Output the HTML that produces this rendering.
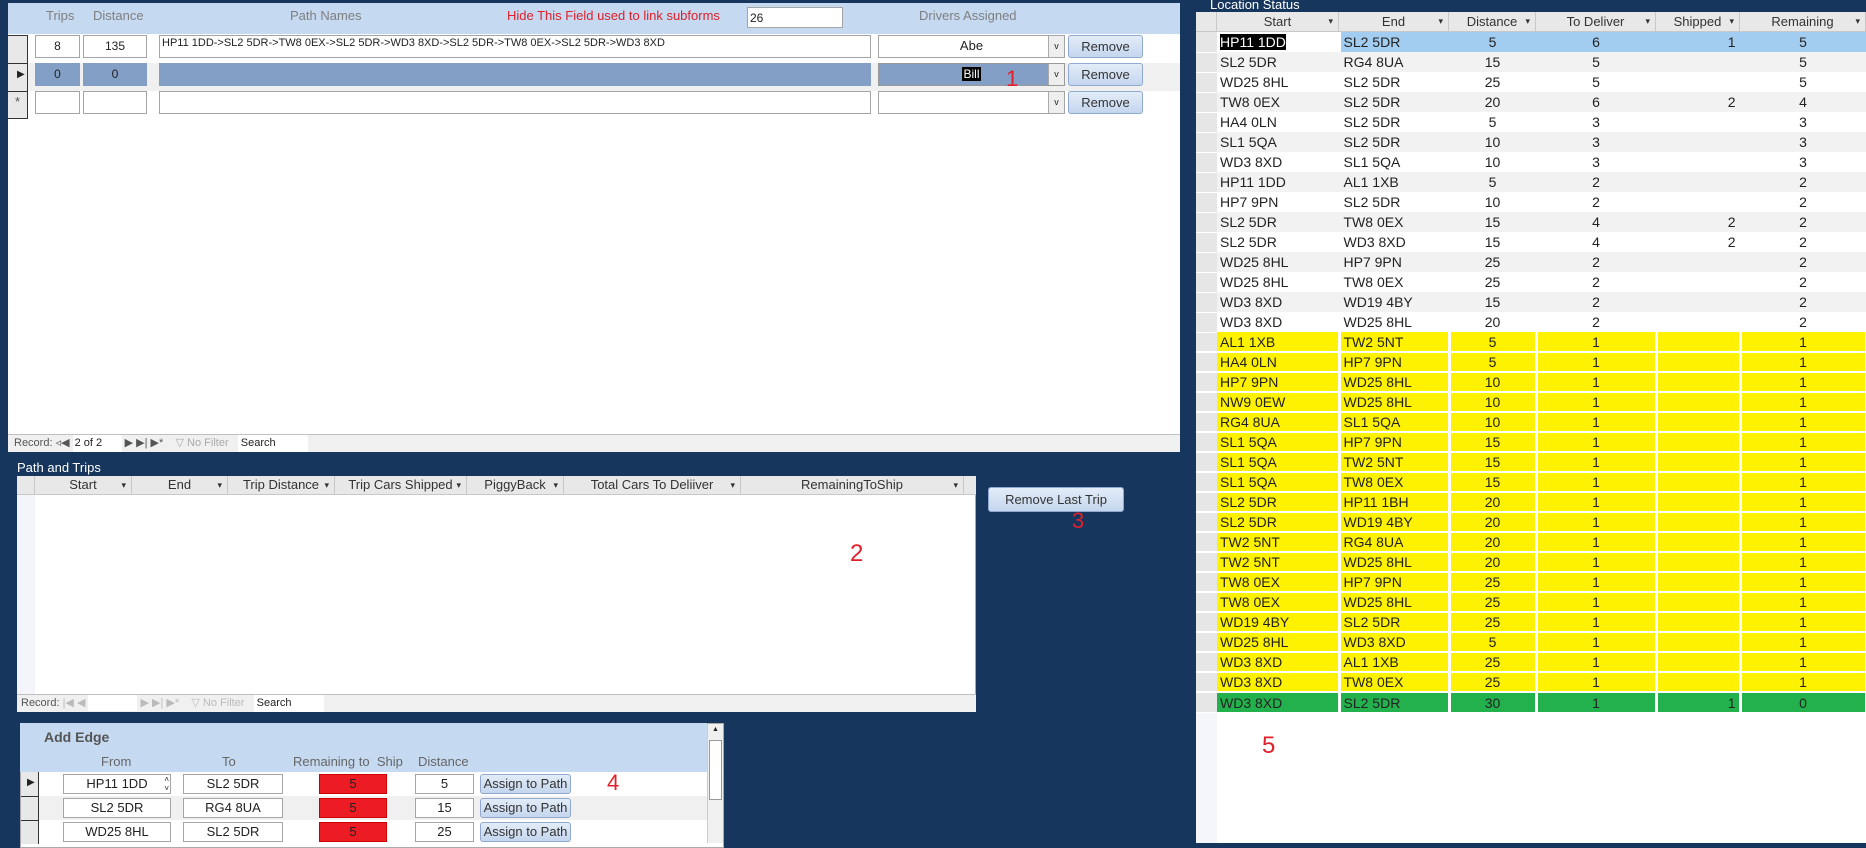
<!DOCTYPE html>
<html><head><meta charset="utf-8"><style>
*{box-sizing:border-box;margin:0;padding:0}
body{width:1866px;height:843px;background:#17365d;font-family:"Liberation Sans",sans-serif;position:relative;overflow:hidden;font-size:12px;color:#222}
.a{position:absolute}
.box{position:absolute;background:#fff;border:1px solid #a5a5a5;font-size:12px;text-align:center;line-height:20px}
.btn{position:absolute;background:linear-gradient(#e3ecf8,#c4d6ee);border:1px solid #8fa9cf;border-radius:3px;font-size:13px;text-align:center;color:#333}
.red{color:#e0202a;font-size:24px}
.hdr{position:absolute;background:#e8e8e8;border-bottom:1px solid #c8c8c8;font-size:13px;color:#333}
.hdr span{position:absolute;top:0;height:100%;border-right:1px solid #c8c8c8;text-align:center}
.hdr span i{position:absolute;right:5px;font-style:normal;font-size:9px}
table{border-collapse:collapse;table-layout:fixed}
#ls td{height:20px;font-size:14px;border-right:3px solid #fff;border-bottom:0;padding:0 3px;white-space:nowrap;overflow:hidden}
#ls td.s{background:#e6e6e6;border-bottom:1px solid #fff;border-right:0}
#ls tr.y td{background:#fff200;border-bottom:2px solid #fff}
#ls tr.y td.s,#ls tr.g td.s{background:#e6e6e6}
#ls tr.g td{background:#22b14c}
#ls tr.w td{background:#fff;border-right-color:#fff}
#ls tr.e td{background:#f2f2f2;border-right-color:#f2f2f2}
#ls tr.b td{background:#a3cdf0;border-right-color:#a3cdf0}
#ls tr.w td.s,#ls tr.e td.s,#ls tr.b td.s{background:#e6e6e6}
#ls td.c{text-align:center}#ls td.r{text-align:right}
.nav{position:absolute;background:#f0f0f0;border-top:1px solid #c0c0c0;font-size:11px;color:#555}
</style></head><body>

<!-- Top form -->
<div class="a" style="left:8px;top:3px;width:1172px;height:449px;background:#fff"></div>
<div class="a" style="left:8px;top:3px;width:1172px;height:31px;background:#c5d9f1"></div>
<div class="a" style="left:46px;top:8px;font-size:13px;color:#7f7f7f">Trips</div>
<div class="a" style="left:93px;top:8px;font-size:13px;color:#7f7f7f">Distance</div>
<div class="a" style="left:290px;top:8px;font-size:13px;color:#7f7f7f">Path Names</div>
<div class="a" style="left:507px;top:8px;font-size:13px;color:#e0202a">Hide This Field used to link subforms</div>
<div class="box" style="left:747px;top:7px;width:96px;height:21px;text-align:left;padding-left:2px;font-size:12px">26</div>
<div class="a" style="left:919px;top:8px;font-size:13px;color:#7f7f7f">Drivers Assigned</div>

<div class="a" style="left:8px;top:35px;width:1172px;height:28px;background:#fff"></div>
<div class="a" style="left:8px;top:63px;width:1172px;height:28px;background:#f0f0f0"></div>
<div class="a" style="left:8px;top:35px;width:20px;height:84px;background:#e8e8e8;border:1px solid #333;border-left:0"></div>
<div class="a" style="left:8px;top:63px;width:20px;height:1px;background:#333"></div>
<div class="a" style="left:8px;top:91px;width:20px;height:1px;background:#333"></div>
<div class="a" style="left:17px;top:69px;font-size:10px">&#9654;</div>
<div class="a" style="left:15px;top:94px;font-size:13px;color:#555">*</div>
<!-- row1 -->
<div class="box" style="left:35px;top:35px;width:45px;height:23px">8</div>
<div class="box" style="left:83px;top:35px;width:64px;height:23px">135</div>
<div class="box" style="left:159px;top:35px;width:712px;height:23px;text-align:left;padding-left:2px;font-size:11px;line-height:14px">HP11 1DD-&gt;SL2 5DR-&gt;TW8 0EX-&gt;SL2 5DR-&gt;WD3 8XD-&gt;SL2 5DR-&gt;TW8 0EX-&gt;SL2 5DR-&gt;WD3 8XD</div>
<div class="box" style="left:878px;top:35px;width:187px;height:23px;font-size:13px">Abe<span style="position:absolute;right:0;top:0;width:16px;height:21px;background:#eee;border-left:1px solid #aaa;font-size:9px">v</span></div>
<div class="btn" style="left:1068px;top:35px;width:75px;height:23px;line-height:21px">Remove</div>
<!-- row2 -->
<div class="box" style="left:35px;top:63px;width:45px;height:23px;background:#849fc5;border-color:#849fc5">0</div>
<div class="box" style="left:83px;top:63px;width:64px;height:23px;background:#849fc5;border-color:#849fc5">0</div>
<div class="box" style="left:159px;top:63px;width:712px;height:23px;background:#849fc5;border-color:#849fc5"></div>
<div class="box" style="left:878px;top:63px;width:187px;height:23px;background:#849fc5;border-color:#999"><span style="background:#000;color:#fff;padding:0 1px">Bill</span><span style="position:absolute;right:0;top:0;width:16px;height:21px;background:#eee;border-left:1px solid #aaa;font-size:9px">v</span></div>
<div class="btn" style="left:1068px;top:63px;width:75px;height:23px;line-height:21px">Remove</div>
<div class="a red" style="left:1006px;top:66px;font-size:22px">1</div>
<!-- row3 -->
<div class="box" style="left:35px;top:91px;width:45px;height:23px"></div>
<div class="box" style="left:83px;top:91px;width:64px;height:23px"></div>
<div class="box" style="left:159px;top:91px;width:712px;height:23px"></div>
<div class="box" style="left:878px;top:91px;width:187px;height:23px"><span style="position:absolute;right:0;top:0;width:16px;height:21px;background:#eee;border-left:1px solid #aaa;font-size:9px">v</span></div>
<div class="btn" style="left:1068px;top:91px;width:75px;height:23px;line-height:21px">Remove</div>
<div class="nav" style="left:8px;top:434px;width:1172px;height:18px;line-height:17px"><span style="margin-left:6px">Record: &#9667;&#9664; </span><span style="display:inline-block;background:#fff;width:49px;padding-left:2px;color:#222">2 of 2</span><span> &#9654; &#9654;| &#9654;* &nbsp;&nbsp; <span style="color:#aaa">&#9661; No Filter</span> &nbsp; </span><span style="display:inline-block;background:#fff;width:70px;padding-left:3px;color:#222">Search</span></div>

<!-- Location Status -->
<div class="a" style="left:1210px;top:-3px;color:#fff;font-size:13px">Location Status</div>
<div class="a" style="left:1196px;top:12px;width:670px;height:831px;background:#fff"></div>
<div class="a" style="left:1196px;top:712px;width:21px;height:131px;background:#f5f6fc"></div>
<div class="hdr" style="left:1196px;top:12px;width:670px;height:20px;line-height:19px">
<span style="left:0;width:21px"></span>
<span style="left:21px;width:122px">Start<i>&#9662;</i></span>
<span style="left:143px;width:110px">End<i>&#9662;</i></span>
<span style="left:253px;width:87px">Distance<i>&#9662;</i></span>
<span style="left:340px;width:120px">To Deliver<i>&#9662;</i></span>
<span style="left:460px;width:84px">Shipped<i>&#9662;</i></span>
<span style="left:544px;width:126px">Remaining<i>&#9662;</i></span>
</div>
<table id="ls" class="a" style="left:1196px;top:32px;width:670px">
<colgroup><col style="width:21px"><col style="width:122px"><col style="width:110px"><col style="width:87px"><col style="width:120px"><col style="width:84px"><col style="width:126px"></colgroup>
<tr class="b"><td class="s"></td><td style="background:#fff;border-right-color:#fff"><span style="background:#000;color:#fff">HP11 1DD</span></td><td>SL2 5DR</td><td class="c">5</td><td class="c">6</td><td class="r">1</td><td class="c">5</td></tr>
<tr class="e"><td class="s"></td><td>SL2 5DR</td><td>RG4 8UA</td><td class="c">15</td><td class="c">5</td><td class="r"></td><td class="c">5</td></tr>
<tr class="w"><td class="s"></td><td>WD25 8HL</td><td>SL2 5DR</td><td class="c">25</td><td class="c">5</td><td class="r"></td><td class="c">5</td></tr>
<tr class="e"><td class="s"></td><td>TW8 0EX</td><td>SL2 5DR</td><td class="c">20</td><td class="c">6</td><td class="r">2</td><td class="c">4</td></tr>
<tr class="w"><td class="s"></td><td>HA4 0LN</td><td>SL2 5DR</td><td class="c">5</td><td class="c">3</td><td class="r"></td><td class="c">3</td></tr>
<tr class="e"><td class="s"></td><td>SL1 5QA</td><td>SL2 5DR</td><td class="c">10</td><td class="c">3</td><td class="r"></td><td class="c">3</td></tr>
<tr class="w"><td class="s"></td><td>WD3 8XD</td><td>SL1 5QA</td><td class="c">10</td><td class="c">3</td><td class="r"></td><td class="c">3</td></tr>
<tr class="e"><td class="s"></td><td>HP11 1DD</td><td>AL1 1XB</td><td class="c">5</td><td class="c">2</td><td class="r"></td><td class="c">2</td></tr>
<tr class="w"><td class="s"></td><td>HP7 9PN</td><td>SL2 5DR</td><td class="c">10</td><td class="c">2</td><td class="r"></td><td class="c">2</td></tr>
<tr class="e"><td class="s"></td><td>SL2 5DR</td><td>TW8 0EX</td><td class="c">15</td><td class="c">4</td><td class="r">2</td><td class="c">2</td></tr>
<tr class="w"><td class="s"></td><td>SL2 5DR</td><td>WD3 8XD</td><td class="c">15</td><td class="c">4</td><td class="r">2</td><td class="c">2</td></tr>
<tr class="e"><td class="s"></td><td>WD25 8HL</td><td>HP7 9PN</td><td class="c">25</td><td class="c">2</td><td class="r"></td><td class="c">2</td></tr>
<tr class="w"><td class="s"></td><td>WD25 8HL</td><td>TW8 0EX</td><td class="c">25</td><td class="c">2</td><td class="r"></td><td class="c">2</td></tr>
<tr class="e"><td class="s"></td><td>WD3 8XD</td><td>WD19 4BY</td><td class="c">15</td><td class="c">2</td><td class="r"></td><td class="c">2</td></tr>
<tr class="w"><td class="s"></td><td>WD3 8XD</td><td>WD25 8HL</td><td class="c">20</td><td class="c">2</td><td class="r"></td><td class="c">2</td></tr>
<tr class="y"><td class="s"></td><td>AL1 1XB</td><td>TW2 5NT</td><td class="c">5</td><td class="c">1</td><td></td><td class="c">1</td></tr>
<tr class="y"><td class="s"></td><td>HA4 0LN</td><td>HP7 9PN</td><td class="c">5</td><td class="c">1</td><td></td><td class="c">1</td></tr>
<tr class="y"><td class="s"></td><td>HP7 9PN</td><td>WD25 8HL</td><td class="c">10</td><td class="c">1</td><td></td><td class="c">1</td></tr>
<tr class="y"><td class="s"></td><td>NW9 0EW</td><td>WD25 8HL</td><td class="c">10</td><td class="c">1</td><td></td><td class="c">1</td></tr>
<tr class="y"><td class="s"></td><td>RG4 8UA</td><td>SL1 5QA</td><td class="c">10</td><td class="c">1</td><td></td><td class="c">1</td></tr>
<tr class="y"><td class="s"></td><td>SL1 5QA</td><td>HP7 9PN</td><td class="c">15</td><td class="c">1</td><td></td><td class="c">1</td></tr>
<tr class="y"><td class="s"></td><td>SL1 5QA</td><td>TW2 5NT</td><td class="c">15</td><td class="c">1</td><td></td><td class="c">1</td></tr>
<tr class="y"><td class="s"></td><td>SL1 5QA</td><td>TW8 0EX</td><td class="c">15</td><td class="c">1</td><td></td><td class="c">1</td></tr>
<tr class="y"><td class="s"></td><td>SL2 5DR</td><td>HP11 1BH</td><td class="c">20</td><td class="c">1</td><td></td><td class="c">1</td></tr>
<tr class="y"><td class="s"></td><td>SL2 5DR</td><td>WD19 4BY</td><td class="c">20</td><td class="c">1</td><td></td><td class="c">1</td></tr>
<tr class="y"><td class="s"></td><td>TW2 5NT</td><td>RG4 8UA</td><td class="c">20</td><td class="c">1</td><td></td><td class="c">1</td></tr>
<tr class="y"><td class="s"></td><td>TW2 5NT</td><td>WD25 8HL</td><td class="c">20</td><td class="c">1</td><td></td><td class="c">1</td></tr>
<tr class="y"><td class="s"></td><td>TW8 0EX</td><td>HP7 9PN</td><td class="c">25</td><td class="c">1</td><td></td><td class="c">1</td></tr>
<tr class="y"><td class="s"></td><td>TW8 0EX</td><td>WD25 8HL</td><td class="c">25</td><td class="c">1</td><td></td><td class="c">1</td></tr>
<tr class="y"><td class="s"></td><td>WD19 4BY</td><td>SL2 5DR</td><td class="c">25</td><td class="c">1</td><td></td><td class="c">1</td></tr>
<tr class="y"><td class="s"></td><td>WD25 8HL</td><td>WD3 8XD</td><td class="c">5</td><td class="c">1</td><td></td><td class="c">1</td></tr>
<tr class="y"><td class="s"></td><td>WD3 8XD</td><td>AL1 1XB</td><td class="c">25</td><td class="c">1</td><td></td><td class="c">1</td></tr>
<tr class="y"><td class="s"></td><td>WD3 8XD</td><td>TW8 0EX</td><td class="c">25</td><td class="c">1</td><td></td><td class="c">1</td></tr>
<tr class="g"><td class="s"></td><td>WD3 8XD</td><td>SL2 5DR</td><td class="c">30</td><td class="c">1</td><td class="r">1</td><td class="c">0</td></tr>
</table>
<div class="a red" style="left:1262px;top:732px">5</div>

<!-- Path and Trips -->
<div class="a" style="left:17px;top:460px;color:#fff;font-size:13px">Path and Trips</div>
<div class="a" style="left:17px;top:476px;width:959px;height:236px;background:#fff;border:1px solid #aaa"></div>
<div class="a" style="left:17px;top:495px;width:18px;height:199px;background:#f3f5fb"></div>
<div class="hdr" style="left:17px;top:476px;width:959px;height:19px;line-height:18px">
<span style="left:0;width:18px"></span>
<span style="left:18px;width:97px">Start<i>&#9662;</i></span>
<span style="left:115px;width:96px">End<i>&#9662;</i></span>
<span style="left:211px;width:107px">Trip Distance<i>&#9662;</i></span>
<span style="left:318px;width:132px">Trip Cars Shipped<i>&#9662;</i></span>
<span style="left:450px;width:97px">PiggyBack<i>&#9662;</i></span>
<span style="left:547px;width:177px">Total Cars To Deliiver<i>&#9662;</i></span>
<span style="left:724px;width:223px">RemainingToShip<i>&#9662;</i></span>
</div>
<div class="nav" style="left:17px;top:694px;width:959px;height:18px;line-height:17px"><span style="margin-left:4px">Record: <span style="color:#bbb">|&#9664; &#9664;</span> </span><span style="display:inline-block;background:#fff;width:49px;height:16px;vertical-align:middle"></span><span style="color:#bbb"> &#9654; &#9654;| &#9654;* &nbsp;&nbsp; &#9661; No Filter</span> &nbsp; <span style="display:inline-block;background:#fff;width:70px;padding-left:3px;color:#222">Search</span></div>
<div class="a red" style="left:850px;top:540px">2</div>
<div class="btn" style="left:988px;top:487px;width:136px;height:25px;line-height:23px;font-size:13px">Remove Last Trip</div>
<div class="a red" style="left:1072px;top:508px;font-size:22px">3</div>

<!-- Add Edge -->
<div class="a" style="left:20px;top:723px;width:704px;height:125px;background:#fff;border:1px solid #aaa"></div>
<div class="a" style="left:20px;top:723px;width:687px;height:49px;background:#c5d9f1"></div>
<div class="a" style="left:44px;top:729px;font-size:14px;font-weight:bold;color:#555">Add Edge</div>
<div class="a" style="left:101px;top:754px;font-size:13px;color:#666">From</div>
<div class="a" style="left:222px;top:754px;font-size:13px;color:#666">To</div>
<div class="a" style="left:293px;top:754px;font-size:13px;color:#666">Remaining to&nbsp; Ship</div>
<div class="a" style="left:418px;top:754px;font-size:13px;color:#666">Distance</div>
<div class="a" style="left:707px;top:724px;width:16px;height:119px;background:#f0f0f0;border-left:1px solid #ccc"><div style="position:absolute;left:1px;top:2px;width:13px;height:10px;font-size:7px;text-align:center">&#9650;</div><div style="position:absolute;left:1px;top:16px;width:13px;height:60px;background:#fff;border:1px solid #999"></div></div>
<div class="a" style="left:21px;top:772px;width:686px;height:24px;background:#fff"></div>
<div class="a" style="left:21px;top:796px;width:686px;height:24px;background:#f0f0f0"></div>
<div class="a" style="left:21px;top:820px;width:686px;height:24px;background:#fff"></div>
<div class="a" style="left:21px;top:772px;width:18px;height:72px;background:#e8e8e8;border-right:1px solid #333"></div>
<div class="a" style="left:21px;top:796px;width:18px;height:1px;background:#333"></div>
<div class="a" style="left:21px;top:820px;width:18px;height:1px;background:#333"></div>
<div class="a" style="left:27px;top:777px;font-size:10px">&#9654;</div>

<div class="box" style="left:63px;top:774px;width:108px;height:20px;font-size:13px;line-height:18px">HP11 1DD<span style="position:absolute;right:1px;top:0;font-size:8px;line-height:9px">&#708;<br>&#709;</span></div>
<div class="box" style="left:183px;top:774px;width:100px;height:20px;font-size:13px;line-height:18px">SL2 5DR</div>
<div class="box" style="left:319px;top:774px;width:68px;height:20px;background:#ed1c24;border-color:#c00;font-size:13px;line-height:18px">5</div>
<div class="box" style="left:415px;top:774px;width:59px;height:20px;font-size:13px;line-height:18px">5</div>
<div class="btn" style="left:480px;top:774px;width:91px;height:20px;line-height:18px;font-size:13px">Assign to Path</div>
<div class="a red" style="left:607px;top:770px;font-size:22px">4</div>

<div class="box" style="left:63px;top:798px;width:108px;height:20px;font-size:13px;line-height:18px">SL2 5DR</div>
<div class="box" style="left:183px;top:798px;width:100px;height:20px;font-size:13px;line-height:18px">RG4 8UA</div>
<div class="box" style="left:319px;top:798px;width:68px;height:20px;background:#ed1c24;border-color:#c00;font-size:13px;line-height:18px">5</div>
<div class="box" style="left:415px;top:798px;width:59px;height:20px;font-size:13px;line-height:18px">15</div>
<div class="btn" style="left:480px;top:798px;width:91px;height:20px;line-height:18px;font-size:13px">Assign to Path</div>

<div class="box" style="left:63px;top:822px;width:108px;height:20px;font-size:13px;line-height:18px">WD25 8HL</div>
<div class="box" style="left:183px;top:822px;width:100px;height:20px;font-size:13px;line-height:18px">SL2 5DR</div>
<div class="box" style="left:319px;top:822px;width:68px;height:20px;background:#ed1c24;border-color:#c00;font-size:13px;line-height:18px">5</div>
<div class="box" style="left:415px;top:822px;width:59px;height:20px;font-size:13px;line-height:18px">25</div>
<div class="btn" style="left:480px;top:822px;width:91px;height:20px;line-height:18px;font-size:13px">Assign to Path</div>
</body></html>
